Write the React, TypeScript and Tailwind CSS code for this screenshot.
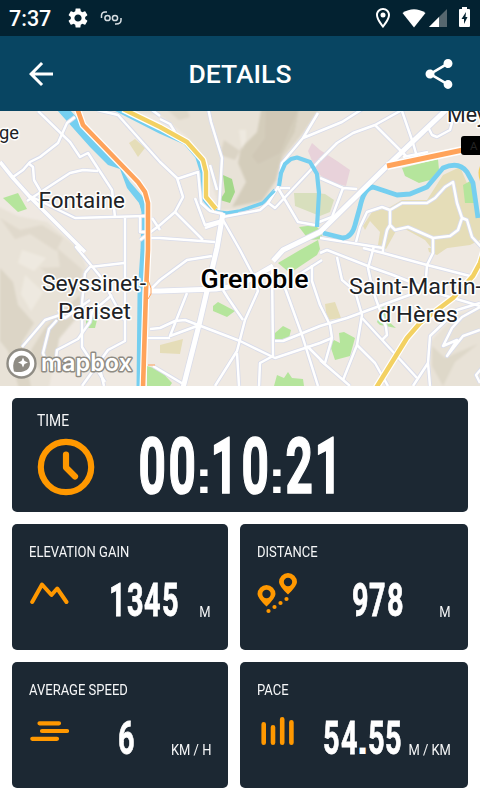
import React from "react";
import { MdArrowBack, MdOutlineLocationOn, MdSettings, MdShare } from "react-icons/md";

const minorRoads = [
  "M75 117L67 123L58 143L40 157L30 162L23 170L13 177",
  "M38 111L70 142L80 157L88 153L112 190L115 217",
  "M28 163L33 167L34 180L41 192",
  "M27 201L70 173L83 170L98 171",
  "M30 196L75 218L145 216M125 217V341L108 350L82 386",
  "M97 110L118 115L160 162L177 178L183 197L175 212L160 225L140 240",
  "M152 110L160 116M160 119L170 124L175 132",
  "M208 108L211 122L222 158L219 210M210 165L217 190",
  "M177 179L198 172L201 203L210 211L223 214",
  "M195 198L205 225L223 220M205 228L223 222",
  "M175 212L203 240M150 238L160 238L215 242",
  "M223 220L240 250L252 273L258 291L245 320L237 351L215 386",
  "M223 217L260 210L268 203L278 187L282 163L303 138L318 113M303 138L342 122L364 108",
  "M320 160L337 143L353 133L375 125L402 110",
  "M278 188L298 222L315 225M267 202L275 208L320 160M280 188L290 188",
  "M150 290L160 280L187 260L212 256",
  "M187 293L170 336L197 326M150 329L160 328L175 321L185 320L240 341L275 358L320 343L332 338",
  "M223 290L228 298L243 320",
  "M272 265L273 356L260 363L259 386M285 288L302 335L318 386",
  "M275 341H283L320 326L347 318L420 291",
  "M237 353L239 386M153 366L185 385M147 338H170",
  "M300 274L322 260M312 265V281L320 305L330 325L332 338L325 363",
  "M307 346L325 364",
  "M320 253L327 250L373 268L393 275L443 295L480 306",
  "M363 248L383 253L427 265L470 276M383 248V253",
  "M337 257L342 280L355 291L362 315L357 345L343 380",
  "M374 246L368 268L373 291L386 327L387 335L382 340",
  "M362 318L417 378M357 345L375 363L388 386M320 360L350 386",
  "M433 238V253L427 265L426 278",
  "M480 303L457 310L430 336L428 363L413 386M428 363L430 386",
  "M480 307L462 317L452 328L443 346L457 340L447 356L463 336L480 330",
  "M482 368L476 375L480 383",
  "M375 125L407 157M402 111L413 143L417 157M403 157L428 152",
  "M428 127L432 135L437 137L450 130L453 119",
  "M320 178L343 188L357 189M343 188L332 217L319 222",
  "M320 238L383 248L387 230L390 225V210L402 203H427L435 198L445 187L453 182L457 203L462 218L458 230L450 236L433 238L408 227L395 230L390 225",
  "M462 218L467 220L472 237L484 250M356 242L360 227L367 212L382 207L390 210",
  "M82 250L76 247L100 276L124 320",
  "M85 273L90 267L124 263M85 273L82 303V347L105 382",
  "M112 295L92 312L90 322L78 339L57 350L55 367M90 300L65 318L58 310M60 315L45 320L22 347",
  "M57 320L49 329L43 353L50 372M100 369L104 386M152 218L160 230M140 217V232H145",
];

const majorRoads = [
  "M223 213L217 248L200 321L183 388",
  "M448 108L383 170L320 232L283 250L273 261",
  "M273 266L240 285L216 289L160 291H148",
];

function CityMap() {
  return (
    <svg viewBox="0 111 480 275" className="block h-[275px] w-full shrink-0 bg-[#efe9e2]" role="img" aria-label="Map of Grenoble">
      <defs>
        <filter id="soft" x="-5%" y="-5%" width="110%" height="110%"><feGaussianBlur stdDeviation="1.2" /></filter>
      </defs>
      <g filter="url(#soft)">
        <g fill="#e8e2d7">
          <path d="M65 105H320L300 138L282 160L274 195L255 209L220 210L208 170L187 137L160 115Z" />
          <path d="M-5 205L18 216L47 222L80 250L88 272L82 310L60 335L48 392H-5Z" />
          <path d="M430 392V342L455 315L486 306V392Z" />
        </g>
        <g fill="#d4cdbb">
          <path d="M262 105H300L295 132L282 155L276 180L262 201L232 207L246 182L238 163L241 148L257 132Z" />
          <path d="M224 140L240 151L235 160L220 155Z" opacity=".65" />
          <path d="M162 105L179 120L190 117L185 105Z" opacity=".5" />
          <path d="M0 218L20 230L42 225L63 238L56 251L30 234L15 239Z" opacity=".4" />
          <path d="M57 248L83 270L77 292L62 286L40 268L60 267Z" opacity=".4" />
          <path d="M0 268L13 282L18 305L34 323L22 342L32 392H20L8 351L0 341Z" opacity=".6" />
          <path d="M80 295L82 312L59 339L56 360L40 371L31 350L45 328L63 310Z" opacity=".6" />
          <path d="M432 346L445 358L478 344L455 362L443 386L432 366Z" opacity=".5" />
        </g>
        <path d="M266 105H300L290 128L280 153L258 164L252 156L265 138Z" fill="#cbc4b1" opacity=".5" />
        <path d="M300 105H322L304 132L284 156L276 180L282 155L295 132Z" fill="#ded7c8" />
        <g fill="#f5f1ea" opacity=".5">
          <path d="M239 130H246V140L242 150Z" />
          <path d="M22 250L46 258L34 271L18 263Z" />
          <path d="M25 275L43 292L31 311L21 294Z" />
        </g>
      </g>
      <g fill="#e5ddb8">
        <path d="M129 143L135 139L145 148L138 157Z" />
        <path d="M363 226L372 212L390 207L402 200L427 200L443 175L460 167L470 190L480 217V240L470 245L433 250L425 240L405 229L396 231L386 249L378 245L380 232L370 221L365 230Z" />
        <path d="M160 345L183 339L180 354L160 353Z" />
        <path d="M325 304L335 302L341 318L327 320ZM428 248H447L437 255L429 252Z" />
      </g>
      <path d="M308 151L312 143L320 150L337 161L350 170L346 186L330 182L320 175L313 163Z" fill="#e8d2da" />
      <path d="M294 193L317 193L325 194L334 200L330 212L320 216L295 206Z" fill="#d8dfbd" />
      <g fill="#b5e59c">
        <path d="M3 198L18 193L27 209L18 212Z" />
        <path d="M223 175L232 179L235 192L230 203L220 200L225 192Z" fill="#a3d889" />
        <path d="M278 263L300 250L318 240L320 249L317 255L290 273Z" />
        <path d="M299 227L315 225L320 230L323 239L309 240Z" />
        <path d="M402 168L438 159L439 170L430 180L419 183L405 176Z" />
        <path d="M463 185L472 180L474 203H465Z" />
        <path d="M213 306L218 302L235 311L227 317L213 311Z" />
        <path d="M275 333L283 326L291 330L289 338L275 340Z" />
        <path d="M147 366L160 370L172 383L170 386H147Z" />
        <path d="M274 386L277 375L284 378L288 372L292 378L303 379L304 386Z" />
        <path d="M330 345L334 340L340 343L339 333L344 332L355 338L350 356L335 360Z" />
        <path d="M377 322L383 306L388 321L396 328L380 325ZM86 319L90 314L97 320L95 328L86 328Z" />
      </g>
      <g fill="none" stroke="#75cff0" strokeLinejoin="round">
        <path d="M57 110H70L105 149L120 167L130 182L143 197L144 217L139 203L127 188L120 169L108 165L90 147Z" fill="#75cff0" stroke="none" />
        <path d="M141 198L144 212L143 250L140 295L139 388" strokeWidth="5" />
        <path d="M115 109L160 132L185 143L197 157L202 173L202 197L210 207L218 212" strokeWidth="3.4" />
        <path d="M218 212L227 213L240 211L263 203L275 190" strokeWidth="3.5" />
      </g>
      <g fill="none" strokeLinejoin="round">
        {minorRoads.map((d) => <path key={d} d={d} stroke="#d9dcea" strokeWidth="4.2" />)}
        {majorRoads.map((d) => <path key={d} d={d} stroke="#d9dcea" strokeWidth="6.6" />)}
        <path d="M0 162L13 178L30 197L85 252" stroke="#d9dcea" strokeWidth="5.2" />
        {minorRoads.map((d) => <path key={d} d={d} stroke="#fff" strokeWidth="2.5" />)}
        <path d="M0 162L13 178L30 197L85 252" stroke="#fff" strokeWidth="3.6" />
      </g>
      <g fill="none" stroke="#75cff0" strokeLinejoin="round">
        <path d="M225 213.500L238 211.500M242 210L263 203L275 191" strokeWidth="2.2" />
        <path d="M279 186L281 173L285 164L291 159L297 157.500L310 162L317 174L319 193L317 227" strokeWidth="4.2" />
        <path d="M323 233L343 238Q352 237 355 225L360 207Q364 188 373 187L397 195L410 194L427 187L443 168Q459 161 467 172L473 183L478 218" strokeWidth="4.8" />
      </g>
      <g fill="none" stroke="#fff" strokeWidth="5" strokeLinejoin="round">
        {majorRoads.map((d) => <path key={d} d={d} />)}
      </g>
      <g fill="none" strokeLinejoin="round">
        <path d="M77 108L83 125L138 182L145 192L148 203V250L146 291L143 388" stroke="#fff" strokeWidth="7" />
        <path d="M77 108L83 125L138 182L145 192L148 203V250L146 291L143 388" stroke="#ffa35a" strokeWidth="4.6" />
        <path d="M123 109L160 127L187 142L203 160L206 172V197L216 209" stroke="#fff" strokeWidth="7" />
        <path d="M123 109L160 127L187 142L203 160L206 172V197L216 209" stroke="#f3d162" strokeWidth="4.4" />
        <path d="M484 250L480 263L473 276L453 298L420 323L407 338L376 388" stroke="#fff" strokeWidth="7" />
        <path d="M484 250L480 263L473 276L453 298L420 323L407 338L376 388" stroke="#f3d162" strokeWidth="4.6" />
        <path d="M387 166L463 150" stroke="#fff" strokeWidth="8" />
        <path d="M387 166L463 150" stroke="#ffa35a" strokeWidth="5" />
        <path d="M148 280L151 288V294L148 299M148 365H155" stroke="#ffa35a" />
      </g>
      <path d="M480 166Q477 173 480 181Z" fill="#f3d162" />
      <rect x="461" y="136" width="30" height="19" rx="3" fill="#000" />
      <text x="470" y="150" fontSize="11.500" fill="#242424" className="font-['Roboto',sans-serif]">A</text>
      <g className="font-['Roboto',sans-serif]" fontSize="21.500" fill="#202225" stroke="#fff" strokeWidth="3" strokeLinejoin="round" paintOrder="stroke">
        <text x="-1" y="139" fontSize="19" textLength="20" lengthAdjust="spacingAndGlyphs">ge</text>
        <text x="447" y="122" textLength="40" lengthAdjust="spacingAndGlyphs">Mey</text>
        <text x="38.500" y="208" textLength="86.500" lengthAdjust="spacingAndGlyphs">Fontaine</text>
        <text x="42" y="291" textLength="104" lengthAdjust="spacingAndGlyphs">Seyssinet-</text>
        <text x="58" y="319" textLength="73" lengthAdjust="spacingAndGlyphs">Pariset</text>
        <text x="349" y="293.500" textLength="133" lengthAdjust="spacingAndGlyphs">Saint-Martin-</text>
        <text x="378" y="322" textLength="80" lengthAdjust="spacingAndGlyphs">d’Hères</text>
        <text x="200.500" y="287.500" fontSize="25.500" fontWeight="500" fill="#000" textLength="108" lengthAdjust="spacingAndGlyphs">Grenoble</text>
      </g>
      <g stroke="#8f8c84" strokeLinejoin="round">
        <circle cx="21.500" cy="363.500" r="14" fill="#fff" strokeWidth="2.400" />
        <path d="M14 371.500C11.500 363 15 355.500 22 355.500A8 8 0 0 1 30 363.500C30 370.500 22 373.500 14 371.500Z" fill="#8f8c84" stroke="none" />
        <path d="M23 357.500L24.500 361L28 362.500L24.500 364L23 367.500L21.500 364L18 362.500L21.500 361Z" fill="#fff" stroke="none" />
        <text x="41" y="370.500" fontSize="24" fontWeight="600" fill="#fff" strokeWidth="3" paintOrder="stroke" textLength="91" lengthAdjust="spacingAndGlyphs" className="font-['Inter',sans-serif]">mapbox</text>
      </g>
    </svg>
  );
}

function StatusBar() {
  return (
    <div className="flex h-9 shrink-0 items-center bg-[#032231] pl-[9px] pr-[9px] text-white">
      <span className="w-[57px] pt-px text-[21.500px] font-medium leading-9">7:37</span>
      <MdSettings className="size-6" />
      <svg className="ml-[10px] h-4 w-[22px]" viewBox="0 0 22 16" fill="none" stroke="#d7dee2" strokeWidth="1.500">
        <path d="M1.500 8V5Q2 2 5 2H7M21 8V10Q21 14 16 14H15" />
        <circle cx="7.500" cy="8" r="2.600" /><circle cx="15" cy="8" r="2.600" />
      </svg>
      <MdOutlineLocationOn className="ml-auto size-6" />
      <svg className="ml-[7px] h-[19px] w-[24px]" viewBox="0 0 24 19" fill="#fff"><path d="M0.500 4Q12-3.500 23.500 4L12 18.500Z" /></svg>
      <svg className="ml-[3px] h-[18px] w-[18px]" viewBox="0 0 18 18"><path d="M18 0V18H0Z" fill="#56676f" /><path d="M10 8V18H0Z" fill="#fff" /></svg>
      <svg className="mb-[2px] ml-[12px] mr-px h-[20px] w-[11px]" viewBox="0 0 11 20"><path d="M3 0H8V2H10Q11 2 11 3V19Q11 20 10 20H1Q0 20 0 19V3Q0 2 1 2H3Z" fill="#fff" /><path d="M7 5L2.500 12H5V17L8.500 10H6.500Z" fill="#032231" /></svg>
    </div>
  );
}

function TimeIcon() {
  return (
    <svg className="size-[58px]" viewBox="0 0 58 58" fill="none" stroke="#ff9800" strokeWidth="6.200" strokeLinecap="round" strokeLinejoin="round">
      <circle cx="29" cy="29" r="25.200" /><path d="M29 16.500V29.500L38 38.500" />
    </svg>
  );
}

function ElevationIcon() {
  return (
    <svg className="h-12 w-10" viewBox="0 0 40 48" fill="none" stroke="#ff9800" strokeWidth="4" strokeLinecap="round" strokeLinejoin="round">
      <path d="M3.200 34L13 16.500L22.500 27L28.200 20.500L37.500 34" />
    </svg>
  );
}

function DistanceIcon() {
  const pin = "M9 0A9 9 0 0 1 18 9Q18 13 9 21.500Q0 13 0 9A9 9 0 0 1 9 0ZM9 4.800A4.200 4.200 0 1 0 9 13.200A4.200 4.200 0 0 0 9 4.800Z";
  return (
    <svg className="h-12 w-10" viewBox="0 0 40 48" fill="#ff9800" fillRule="evenodd">
      <path d={pin} transform="translate(.5 17)" /><path d={pin} transform="translate(22 5)" />
      <circle cx="11.500" cy="43" r="2.100" /><circle cx="17.500" cy="39" r="2.100" /><circle cx="23.500" cy="35" r="2.100" /><circle cx="29.500" cy="31" r="2.100" />
    </svg>
  );
}

function SpeedIcon() {
  return (
    <svg className="h-12 w-10" viewBox="0 0 40 48" fill="none" stroke="#ff9800" strokeWidth="4.200" strokeLinecap="round">
      <path d="M10.500 17.300H30M13 25H38M3.300 32.800H28" />
    </svg>
  );
}

function PaceIcon() {
  return (
    <svg className="h-12 w-10" viewBox="0 0 40 48" fill="none" stroke="#ff9800" strokeWidth="4.600" strokeLinecap="round">
      <path d="M6.700 18.200V36.700M16 21.200V36.700M25.200 13.200V36.700M34.400 16.200V36.700" />
    </svg>
  );
}

// Tall narrow digit cell; the glyph is squeezed horizontally inside it.
function Digit({ children }: { children: string }) {
  return (
    <span className="flex w-[17.500px] justify-center">
      <span className="block scale-x-[0.62] [-webkit-text-stroke:0.8px_white]">{children}</span>
    </span>
  );
}

function Value({ text }: { text: string }) {
  return (
    <span className="flex h-12 items-baseline justify-center text-[46.500px] font-bold leading-[47px] text-white">
      {text.split("").map((c, i) =>
        c === "." ? (
          <span key={i} className="flex w-[9.500px] justify-center font-['Liberation_Sans',sans-serif] text-[42px] leading-[47px]">.</span>
        ) : (
          <Digit key={i}>{c}</Digit>
        ),
      )}
    </span>
  );
}

function Caption({ children }: { children: string }) {
  return <span className="block w-max origin-left scale-x-[0.84] text-[15.500px] leading-5 text-[#f6f7f8]">{children}</span>;
}

type StatCardProps = { label: string; value: string; unit: string; icon: React.ReactNode; valueInset?: string };

function StatCard({ label, value, unit, icon, valueInset = "" }: StatCardProps) {
  return (
    <div className="h-[126px] rounded-[5px] bg-[#1c2833] px-[17px] pt-[18px]">
      <Caption>{label}</Caption>
      <div className="mt-[6px] flex items-start">
        <span className="w-10 shrink-0">{icon}</span>
        <div className={`ml-[17px] flex min-w-0 flex-1 justify-center pt-[9px] ${valueInset}`}><Value text={value} /></div>
        <span className="-ml-1 mt-[34px] flex shrink-0 justify-end whitespace-nowrap">
          <span className="block origin-right scale-x-[0.835] text-[15.500px] leading-5 text-[#f6f7f8]">{unit}</span>
        </span>
      </div>
    </div>
  );
}

function BigTime({ value }: { value: string }) {
  return (
    <span className="flex items-baseline text-[77px] font-bold leading-[80px] text-white">
      {value.split("").map((c, i) =>
        c === ":" ? (
          <span key={i} className="flex w-[13.500px] justify-center font-['Liberation_Sans',sans-serif] text-[47px] leading-[80px]">
            <span className="block scale-x-110">:</span>
          </span>
        ) : (
          <span key={i} className={`flex w-[30px] justify-center ${c === "1" ? "-ml-px mr-px" : ""}`}>
            <span className="block scale-x-[0.62] [-webkit-text-stroke:1.6px_white]">{c}</span>
          </span>
        ),
      )}
    </span>
  );
}

export default function App() {
  return (
    <div className="flex h-[800px] w-[480px] flex-col overflow-hidden bg-white font-['Roboto','Liberation_Sans',sans-serif]">
      <StatusBar />
      <header className="flex h-[75px] shrink-0 items-center justify-between bg-[#084562] pl-[23px] pr-[23px] text-white">
        <MdArrowBack className="size-9" />
        <h1 className="pt-px text-[26.500px] font-medium leading-8">DETAILS</h1>
        <MdShare className="size-9" />
      </header>
      <CityMap />
      <main className="flex flex-col gap-3 p-3">
        <section className="flex h-[114px] rounded-[5px] bg-[#1c2833] pl-[25px]">
          <div className="flex w-[100px] flex-col pt-[13px]">
            <span className="block w-max origin-left scale-x-[0.84] text-[16.500px] leading-5 text-[#f6f7f8]">TIME</span>
            <span className="mt-[6.500px]"><TimeIcon /></span>
          </div>
          <div className="pt-[29px]"><BigTime value="00:10:21" /></div>
        </section>
        <section className="grid grid-cols-[216px_228px] gap-3">
          <StatCard label="ELEVATION GAIN" value="1345" unit="M" icon={<ElevationIcon />} />
          <StatCard label="DISTANCE" value="978" unit="M" icon={<DistanceIcon />} />
          <StatCard label="AVERAGE SPEED" value="6" unit="KM / H" icon={<SpeedIcon />} />
          <StatCard label="PACE" value="54.55" unit="M / KM" icon={<PaceIcon />} valueInset="pl-[7px]" />
        </section>
      </main>
    </div>
  );
}
